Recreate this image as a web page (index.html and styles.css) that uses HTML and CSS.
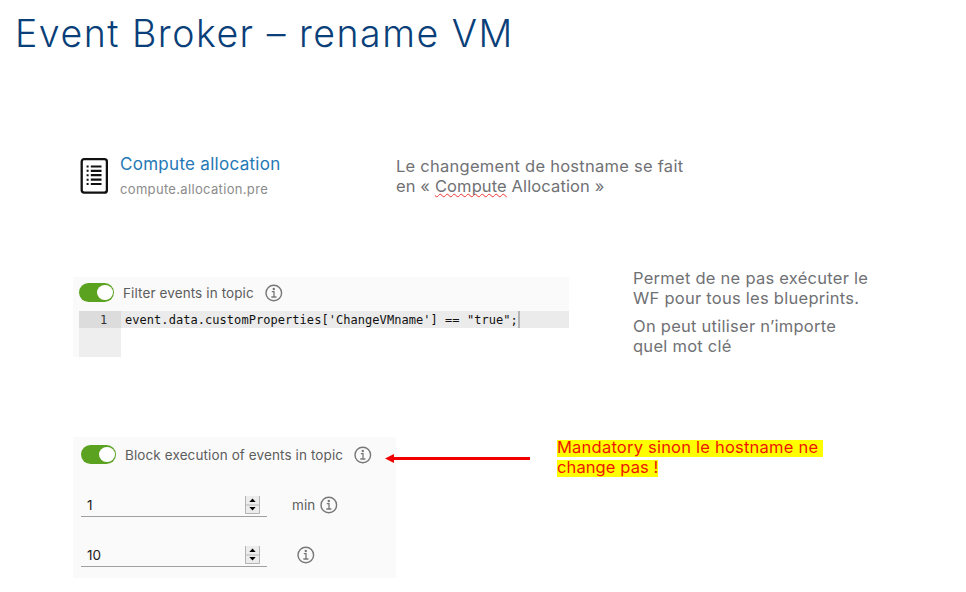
FILE: index.html
```
<!DOCTYPE html>
<html lang="fr">
<head>
<meta charset="utf-8">
<title>Event Broker – rename VM</title>
<link rel="stylesheet" href="styles.css">
</head>
<body>
<svg class="defs" width="0" height="0" aria-hidden="true">
  <symbol id="info" viewBox="0 0 18 18">
    <circle cx="8.8" cy="9" r="7.8" fill="none" stroke="#777" stroke-width="1.4"/>
    <circle cx="8.8" cy="5" r="1.2" fill="#777"/>
    <path d="M6.8 7.7H9V12.8M6.3 13H11.4" fill="none" stroke="#777" stroke-width="1.3"/>
  </symbol>
  <symbol id="spin" viewBox="0 0 15 18">
    <rect width="15" height="18" fill="#ececec"/>
    <path d="M.5 0V17.5H14.5V0M0 9H15" fill="none" stroke="#b4b4b4"/>
    <path d="M4.3 6L7.5 2.6L10.7 6ZM4.3 11L7.5 14.4L10.7 11Z" fill="#000"/>
  </symbol>
</svg>
<main class="slide">
  <h1 class="title">Event Broker – rename VM</h1>

  <section class="row topic-row">
    <svg class="topic-icon" viewBox="0 0 28 36">
      <rect x="1.7" y="1.2" width="25.2" height="33.4" rx="2.5" fill="#fff" stroke="#111" stroke-width="2.3"/>
      <path d="M10.8 8.5H21.5M10.8 12.8H21.5M10.8 17.2H21.5M10.8 21.7H21.5M10.8 26H21.5" stroke="#111" stroke-width="2.2"/>
      <path d="M6.6 8.5H8.6M6.6 12.8H8.6M6.6 17.2H8.6M6.6 21.7H8.6M6.6 26H8.6" stroke="#111" stroke-width="2"/>
    </svg>
    <div class="topic">
      <div class="topic-name">Compute allocation</div>
      <div class="topic-id">compute.allocation.pre</div>
    </div>
    <div class="note note-topic">
      <p>Le changement de hostname se fait<br><span class="snug">en « <span class="typo">Compute</span> Allocation »</span></p>
    </div>
  </section>

  <section class="row filter-row">
    <div class="panel filter">
      <div class="switch-line">
        <span class="toggle"></span>
        <span class="label filter-label">Filter events in topic</span>
        <svg class="info"><use href="#info"/></svg>
      </div>
      <div class="editor">
        <div class="gutter"><div class="line-no">1</div></div>
        <div class="code"><code>event.data.customProperties['ChangeVMname'] == "true";</code></div>
      </div>
    </div>
    <div class="note note-filter">
      <p>Permet de ne pas exécuter le<br>WF pour tous les blueprints.</p>
      <p>On peut utiliser n’importe<br>quel mot clé</p>
    </div>
  </section>

  <section class="row block-row">
    <div class="panel block">
      <div class="switch-line">
        <span class="toggle"></span>
        <span class="label block-label">Block execution of events in topic</span>
        <svg class="info"><use href="#info"/></svg>
      </div>
      <div class="field">
        <div class="number"><span>1</span><svg class="spin"><use href="#spin"/></svg></div>
        <span class="label unit">min</span>
        <svg class="info"><use href="#info"/></svg>
      </div>
      <div class="field">
        <div class="number"><span>10</span><svg class="spin"><use href="#spin"/></svg></div>
        <svg class="info alone"><use href="#info"/></svg>
      </div>
    </div>
    <svg class="arrow" viewBox="0 0 146 10"><path d="M7 5.5H145" stroke="#f00000" stroke-width="3"/><path d="M0 5.5L9 1V10Z" fill="#f00000"/></svg>
    <div class="note warning">
      <p><mark>Mandatory sinon le hostname ne&nbsp;</mark><br><mark class="last">change pas !</mark></p>
    </div>
  </section>
</main>
</body>
</html>
```
FILE: styles.css
```
* { box-sizing: border-box; }
body { margin: 0; background: #fff; font-family: Inter, "Open Sans", sans-serif; }
p, h1 { margin: 0; }
svg { display: block; flex: none; }
.defs { position: absolute; }
.slide { width: 966px; height: 592px; overflow: hidden; display: grid; grid-template-rows: 145px 132px 160px 155px; white-space: nowrap; }
.title { padding: 10px 0 0 15px; font-size: 37.5px; line-height: 48px; font-weight: 300; letter-spacing: 1.5px; color: #0a3f79; }
.row { display: flex; align-items: flex-start; }

.topic-row { padding-left: 80px; }
.topic-icon { width: 28px; height: 36px; margin-top: 13px; }
.topic { width: 288px; padding: 8px 0 0 12px; }
.topic-name { font-size: 17px; line-height: 22px; letter-spacing: .29px; color: #2478b5; }
.topic-id { margin-top: 5px; font-size: 13px; line-height: 18px; letter-spacing: .33px; color: #8b8b8b; }

.note { font-size: 16.5px; line-height: 20px; letter-spacing: .26px; color: #707174; }
.note p + p { margin-top: 8px; }
.note-topic { padding-top: 11px; }
.snug { letter-spacing: .12px; }
.typo { text-decoration: underline wavy #e33 1px; text-underline-offset: 1px; text-decoration-skip-ink: none; }

.panel { background: #fafafa; }
.label { font-size: 13.5px; line-height: 18px; letter-spacing: .11px; color: #5d5d5d; }
.switch-line { display: flex; align-items: center; }
.toggle { display: flex; justify-content: flex-end; flex: none; width: 35px; height: 19px; padding: 2px 1.5px; border-radius: 10px; background: #5aa220; }
.toggle::after { content: ""; width: 15.5px; height: 15px; border-radius: 50%; background: #fff; }
.info { width: 18px; height: 18px; }
.spin { width: 15px; height: 18px; }

.filter { width: 496px; height: 80px; margin-left: 73px; padding: 6px 0 0 6px; }
.filter-label { width: 142px; margin-left: 9px; }
.editor { display: flex; height: 46px; margin-top: 9px; background: #fff; }
.gutter { width: 42px; background: #eee; }
.line-no, .code { height: 17px; font-family: "DejaVu Sans Mono", monospace; font-size: 12px; line-height: 18px; }
.line-no { padding-left: 21px; color: #333; background: #dcdcdc; }
.code { flex: 1; padding-left: 4px; background: #ebebeb; color: #111; }
.code code { display: inline-block; height: 17px; border-right: 2px solid #b4b4b4; font: inherit; letter-spacing: .05px; }
.note-filter { margin: -9px 0 0 64px; }

.block { width: 323px; height: 141px; margin-left: 73px; padding: 8px 0 0 8px; }
.block-label { width: 229px; margin-left: 9px; }
.field { display: flex; align-items: center; height: 24px; margin-top: 29px; }
.field + .field { margin-top: 26px; }
.number { display: flex; justify-content: space-between; align-items: center; width: 186px; height: 24px; padding: 0 7px 0 6px; border-bottom: 1px solid #a0a0a0; font-size: 13.5px; color: #222; }
.unit { width: 28px; margin-left: 25px; }
.alone { margin-left: 30px; }
.arrow { width: 146px; height: 10px; margin: 16px 0 0 -11px; }
.warning { margin: 0 0 0 26px; letter-spacing: .22px; color: #ee1600; }
.warning mark { display: inline-block; height: 17px; line-height: 15px; background: #ff0; color: inherit; }
.warning .last { letter-spacing: .1px; }
```
